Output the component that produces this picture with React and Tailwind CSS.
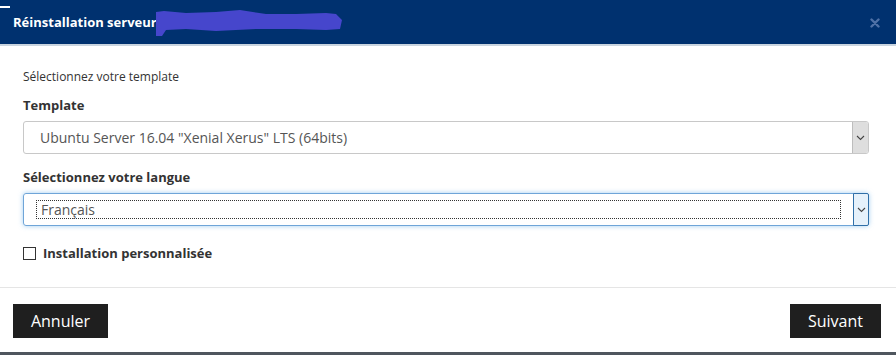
import React from "react";

function Chevron() {
  return (
    <svg width="9" height="6" viewBox="0 0 9 6" className="block">
      <path d="M1 1 L4.5 4.5 L8 1" fill="none" stroke="#444" strokeWidth="1.1" />
    </svg>
  );
}

export default function App() {
  return (
    <div className="w-[896px] h-[355px] bg-white flex flex-col overflow-hidden" style={{ fontFamily: '"Open Sans", "Noto Sans", sans-serif' }}>
      <div className="relative h-[44px] bg-[#00316f] flex items-center justify-between pl-[13px] pr-[16px] shrink-0">
        <div className="absolute left-0 top-[6px] w-[10px] h-[2px] bg-white" />
        <div className="flex items-center">
          <span className="text-white font-bold text-[13px] leading-none">Réinstallation serveur</span>
          <svg width="186" height="26" viewBox="0 0 186 26" className="block -ml-[1px] mt-[2px]">
            <polygon
              points="0,2 8,1 30,3 60,2 84,0 110,4 140,4 170,3 180,4 186,10 184,19 170,20 140,19 100,19 60,21 30,19 10,20 6,26 0,26"
              fill="#4646cc"
            />
          </svg>
        </div>
        <svg width="10" height="10" viewBox="0 0 10 10" className="block mt-[1px]">
          <path d="M1.5 1.5 L8.5 8.5 M8.5 1.5 L1.5 8.5" stroke="#4f71a6" strokeWidth="2.4" strokeLinecap="round" />
        </svg>
      </div>
      <div className="h-[2px] bg-[#c9d4df] shrink-0" />
      <div className="flex flex-col px-[23px] pr-[27px] pt-[23px] h-[241px] shrink-0">
        <div className="text-[12px] text-[#333] leading-[16px]">Sélectionnez votre template</div>
        <div className="text-[13px] font-bold text-[#333] mt-[12px] leading-[16px]">Template</div>
        <div className="mt-[8px] h-[33px] border border-[#c8c8c8] rounded-[3px] flex items-stretch">
          <div className="flex-1 flex items-center pl-[16px] text-[14px] text-[#555]">Ubuntu Server 16.04 "Xenial Xerus" LTS (64bits)</div>
          <div className="w-[16px] bg-[#dedede] border-l border-[#bdbdbd] flex items-center justify-center rounded-r-[2px]">
            <Chevron />
          </div>
        </div>
        <div className="text-[13px] font-bold text-[#333] mt-[15px] leading-[16px]">Sélectionnez votre langue</div>
        <div className="mt-[8px] h-[33px] border border-[#6fa5d8] rounded-[3px] flex items-stretch shadow-[0_0_5px_rgba(102,175,233,0.6)]">
          <div className="flex-1 flex items-center pl-[12px] pr-[12px]">
            <div className="flex-1 h-[19px] border border-dotted border-[#333] flex items-center pl-[4px] text-[14px] text-[#555]">Français</div>
          </div>
          <div className="w-[16px] bg-[#e5f1fb] border border-[#2f6fa8] -my-[1px] -mr-[1px] flex items-center justify-center rounded-r-[2px]">
            <Chevron />
          </div>
        </div>
        <div className="flex items-center mt-[18px]">
          <div className="w-[13px] h-[13px] border border-[#333] bg-white" />
          <span className="ml-[7px] text-[13px] font-bold text-[#333]">Installation personnalisée</span>
        </div>
      </div>
      <div className="h-[1px] bg-[#e5e5e5] shrink-0" />
      <div className="flex justify-between pl-[13px] pr-[15px] pt-[16px] shrink-0">
        <button className="h-[34px] w-[95px] bg-[#1f1f1f] text-white text-[16px] flex items-center justify-center">Annuler</button>
        <button className="h-[34px] w-[91px] bg-[#1f1f1f] text-white text-[16px] flex items-center justify-center">Suivant</button>
      </div>
      <div className="flex-1" />
      <div className="h-[3px] bg-[#4f565e] shrink-0" />
    </div>
  );
}
